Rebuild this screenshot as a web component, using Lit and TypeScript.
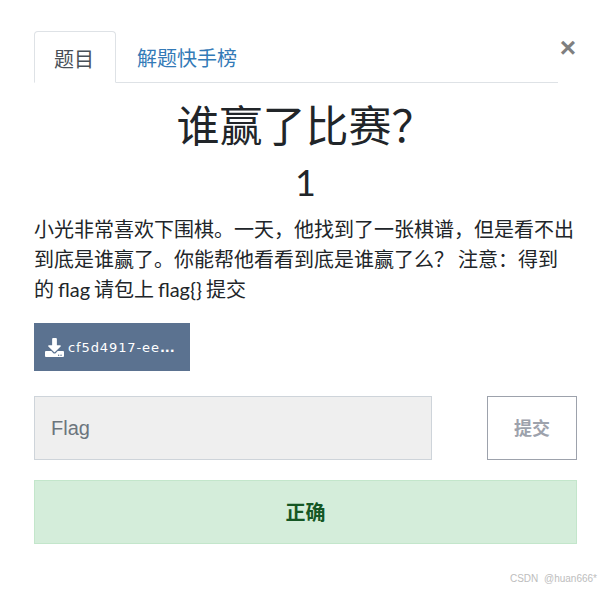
import { LitElement, html, css } from "lit";
import { customElement } from "lit/decorators.js";

@customElement("app-root")
export class AppRoot extends LitElement {
  static styles = css`
    :host {
      display: block;
      position: relative;
      height: 590px;
      box-sizing: border-box;
      padding: 31px 30px 0 34px;
      background: #fff;
      color: #212529;
      font-family: Lato, "Noto Sans CJK SC", sans-serif;
      overflow: hidden;
    }
    .head { display: flex; align-items: flex-start; }
    .tabs {
      display: flex;
      width: 525px;
      height: 51px;
      box-sizing: content-box;
      border-bottom: 1px solid #dee2e6;
      font-size: 20px;
    }
    .tab { box-sizing: border-box; height: 52px; padding: 0 20px; line-height: 54px; }
    .tab.active {
      width: 82px;
      color: #495057;
      background: #fff;
      border: 1px solid #dee2e6;
      border-bottom-color: #fff;
      border-radius: 4px 4px 0 0;
      padding: 0 19px;
    }
    .tab.link { color: #337ab7; padding-left: 21px; }
    .close {
      margin: 2px 0 0 1px;
      width: 18px; height: 30px;
      color: #7f7f7f;
      font: 700 28px/30px "Liberation Sans", sans-serif;
      text-align: center;
    }
    h1 { margin: 16px 0 0; font-size: 43px; line-height: 54px; font-weight: 400; text-align: center; }
    .num { margin-top: 7px; font-size: 36px; line-height: 44px; text-align: center; }
    p { margin: 10px 0 0; font-size: 20px; line-height: 30px; word-spacing: -1.2px; }
    .file {
      display: inline-flex; align-items: center; gap: 4px;
      margin-top: 19px;
      width: 156px; height: 48px; box-sizing: border-box;
      padding-left: 11px;
      background: #5b7290; color: #fff;
      font: 13px "DejaVu Sans", sans-serif;
      letter-spacing: .9px;
      vertical-align: top;
    }
    .file svg { width: 19px; height: 19px; flex: none; }
    .dots { font-weight: 700; letter-spacing: 0; }
    .row { display: flex; justify-content: space-between; margin-top: 25px; }
    .input {
      box-sizing: border-box; width: 398px; height: 64px;
      padding-left: 16px;
      background: #efefef; border: 1px solid #ced4da;
      color: #6c757d; font: 20px/62px "Liberation Sans", sans-serif;
    }
    .submit {
      box-sizing: border-box; width: 90px; height: 64px;
      border: 1px solid #9da2ac; background: #fff;
      color: #9da2ac; font-size: 18px; font-weight: 700;
      line-height: 62px; text-align: center;
    }
    .ok {
      box-sizing: border-box; height: 64px; margin-top: 20px;
      background: #d4edda; border: 1px solid #c3e6cb;
      color: #155724; font-size: 20px; font-weight: 700;
      line-height: 62px; text-align: center;
    }
    .mark {
      position: absolute; right: 10px; bottom: 6px;
      color: #bdbdbd; font: 10px "Liberation Sans", sans-serif; word-spacing: 3px;
    }
  `;

  render() {
    return html`
      <div class="head">
        <div class="tabs">
          <div class="tab active">题目</div>
          <div class="tab link">解题快手榜</div>
        </div>
        <div class="close">×</div>
      </div>
      <h1>谁赢了比赛？</h1>
      <div class="num">1</div>
      <p>小光非常喜欢下围棋。一天，他找到了一张棋谱，但是看不出到底是谁赢了。你能帮他看看到底是谁赢了么？ 注意：得到的 flag 请包上 flag{} 提交</p>
      <div class="file">
        <svg viewBox="0 0 512 512" fill="#fff"><path d="M216 0h80c13 0 24 11 24 24v168h88c18 0 27 21 14 34L270 378c-8 8-20 8-28 0L90 226c-13-13-4-34 14-34h88V24c0-13 11-24 24-24zm296 376v112c0 13-11 24-24 24H24c-13 0-24-11-24-24V376c0-13 11-24 24-24h147l49 49c20 20 52 20 72 0l49-49h147c13 0 24 11 24 24zM388 464a20 20 0 1 0-40 0 20 20 0 0 0 40 0zm64 0a20 20 0 1 0-40 0 20 20 0 0 0 40 0z"/></svg>
        <span>cf5d4917-ee<span class="dots">...</span></span>
      </div>
      <div class="row">
        <div class="input">Flag</div>
        <div class="submit">提交</div>
      </div>
      <div class="ok">正确</div>
      <div class="mark">CSDN @huan666*</div>
    `;
  }
}
